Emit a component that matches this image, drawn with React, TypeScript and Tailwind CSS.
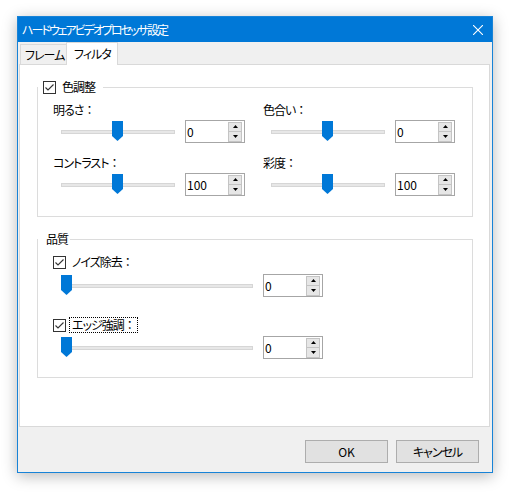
import type { ReactNode } from "react"

const font = "font-['Noto_Sans_CJK_JP','Noto_Sans',sans-serif] [font-feature-settings:'palt'] tracking-[-1px]"

function Colon() {
  return <span className="[font-feature-settings:normal]">：</span>
}

function CheckBox() {
  return (
    <svg width="13" height="13" viewBox="0 0 13 13" className="shrink-0">
      <rect x="0.5" y="0.5" width="12" height="12" fill="#fff" stroke="#333" />
      <polyline
        points="2.5,6.5 5,9 10.5,3.5"
        fill="none"
        stroke="#333"
        strokeWidth="1.1"
      />
    </svg>
  )
}

function Thumb() {
  return (
    <svg width="11" height="20" viewBox="0 0 11 20">
      <path d="M0 0 H11 V15 L5.5 20 L0 15 Z" fill="#0078d7" />
    </svg>
  )
}

function Slider({ width, thumbLeft }: { width: string; thumbLeft: number }) {
  return (
    <div className={`relative flex h-[23px] items-center ${width}`}>
      <div className="h-[4px] w-full border border-[#d6d6d6] bg-[#e7e7e7]" />
      <div className="absolute top-[1px]" style={{ left: thumbLeft }}>
        <Thumb />
      </div>
    </div>
  )
}

function SpinBox({ value }: { value: string }) {
  return (
    <div className="flex h-[23px] w-[60px] items-center justify-between border border-[#a6a6a6] bg-white pl-[1px] pr-[2px]">
      <span className="text-[12px] leading-none tracking-normal text-black">{value}</span>
      <div className="flex flex-col">
        <div className="flex h-[10px] w-[14px] items-center justify-center border border-[#c4c4c4] bg-[#e6e6e6]">
          <svg width="5" height="3" viewBox="0 0 5 3">
            <path d="M2.5 0 L5 3 H0 Z" fill="#000" />
          </svg>
        </div>
        <div className="flex h-[10px] w-[14px] items-center justify-center border border-t-0 border-[#c4c4c4] bg-[#e6e6e6]">
          <svg width="5" height="3" viewBox="0 0 5 3">
            <path d="M0 0 H5 L2.5 3 Z" fill="#000" />
          </svg>
        </div>
      </div>
    </div>
  )
}

function ColorControl({
  label,
  value,
  className = "",
}: {
  label: string
  value: string
  className?: string
}) {
  return (
    <div className={`flex w-[210px] flex-col ${className}`}>
      <div className="h-[16px] whitespace-nowrap text-[12px] leading-[16px] text-black">
        {label}
        <Colon />
      </div>
      <div className="mt-[2px] flex items-center">
        <div className="ml-[8px]">
          <Slider width="w-[114px]" thumbLeft={51} />
        </div>
        <div className="ml-[10px]">
          <SpinBox value={value} />
        </div>
      </div>
    </div>
  )
}

function QualityControl({
  label,
  focused,
  className = "",
  sliderGap,
}: {
  label: string
  focused?: boolean
  className?: string
  sliderGap: string
}) {
  return (
    <div className={`flex flex-col pl-[15px] ${className}`}>
      <div className="flex h-[16px] items-center">
        <CheckBox />
        <span
          className={`ml-[3px] h-[16px] whitespace-nowrap border px-[2px] text-[12px] leading-[14px] text-black ${
            focused ? "border-dotted border-black" : "border-transparent"
          }`}
        >
          {label}
          <Colon />
        </span>
      </div>
      <div className={`flex items-center ${sliderGap}`}>
        <div className="ml-[8px]">
          <Slider width="w-[192px]" thumbLeft={0} />
        </div>
        <div className="ml-[10px]">
          <SpinBox value="0" />
        </div>
      </div>
    </div>
  )
}

function GroupBox({
  legend,
  className,
  children,
}: {
  legend: ReactNode
  className: string
  children: ReactNode
}) {
  return (
    <div className={`flex flex-col border border-[#dcdcdc] ${className}`}>
      <div className="-mt-[8px] flex h-[14px] w-fit items-center bg-white">
        {legend}
      </div>
      {children}
    </div>
  )
}

export default function App() {
  return (
    <div className={`h-[492px] w-[510px] bg-white pl-[17px] pt-[16px] ${font}`}>
      <div className="flex h-[457px] w-[476px] flex-col border border-[#1883d7] bg-[#f0f0f0] shadow-[0_3px_14px_rgba(0,0,0,0.28)]">
        <div className="flex h-[25px] items-center justify-between bg-[#0078d7] pl-[4px] pr-[9px]">
          <span className="text-[12px] leading-none tracking-[-2px] text-white">
            ハードウェアビデオプロセッサ設定
          </span>
          <svg width="10" height="10" viewBox="0 0 10 10">
            <path d="M0 0 L10 10 M10 0 L0 10" stroke="#fff" strokeWidth="1.1" />
          </svg>
        </div>

        <div className="flex h-[22px] items-end pl-[2px]">
          <div className="flex h-[20px] w-[46px] items-center overflow-hidden whitespace-nowrap border-l border-t border-[#d9d9d9] bg-[#f0f0f0] pl-[4px] text-[12px] leading-none text-black">
            フレーム
          </div>
          <div className="relative z-10 -mb-px flex h-[23px] w-[52px] items-center whitespace-nowrap border border-b-0 border-[#d9d9d9] bg-white pl-[7px] text-[12px] leading-none text-black">
            フィルタ
          </div>
        </div>

        <div className="ml-[1px] mr-[2px] flex h-[363px] flex-col border border-[#d9d9d9] bg-white pl-[17px] pr-[16px] pt-[22px]">
          <GroupBox
            className="h-[130px]"
            legend={
              <div className="ml-[5px] flex items-center pr-[8px]">
                <CheckBox />
                <span className="ml-[6px] text-[12px] leading-none text-black">
                  色調整
                </span>
              </div>
            }
          >
            <div className="mt-[8px] grid grid-cols-[210px_210px] pl-[15px]">
              <ColorControl label="明るさ" value="0" />
              <ColorControl label="色合い" value="0" />
              <ColorControl label="コントラスト" value="100" className="mt-[12px]" />
              <ColorControl label="彩度" value="100" className="mt-[12px]" />
            </div>
          </GroupBox>

          <GroupBox
            className="mt-[22px] h-[139px]"
            legend={
              <span className="ml-[5px] pl-[3px] pr-[2px] text-[12px] leading-none text-black">
                品質
              </span>
            }
          >
            <QualityControl label="ノイズ除去" className="mt-[8px]" sliderGap="mt-[4px]" />
            <QualityControl
              label="エッジ強調"
              focused
              className="mt-[20px]"
              sliderGap="mt-[3px]"
            />
          </GroupBox>
        </div>

        <div className="flex justify-end gap-[8px] pr-[13px] pt-[13px]">
          <button className="flex h-[23px] w-[83px] items-center justify-center border border-[#adadad] bg-[#e1e1e1] text-[12px] leading-none tracking-normal text-black">
            OK
          </button>
          <button className="flex h-[23px] w-[83px] items-center justify-center border border-[#adadad] bg-[#e1e1e1] text-[12px] leading-none text-black">
            キャンセル
          </button>
        </div>
      </div>
    </div>
  )
}
